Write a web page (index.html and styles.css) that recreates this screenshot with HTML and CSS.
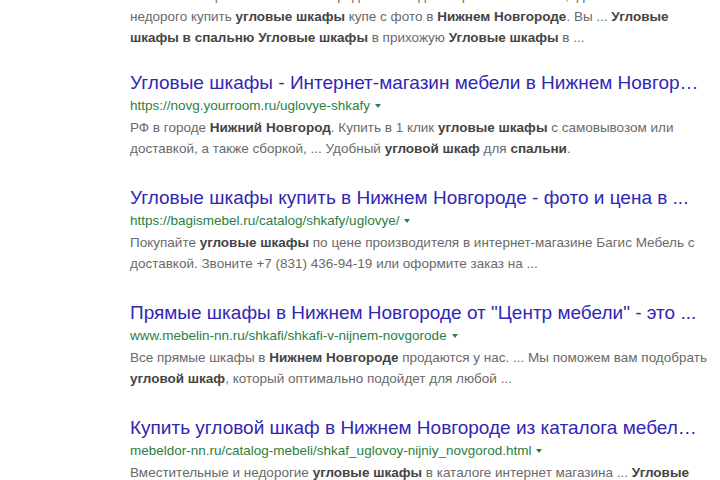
FILE: index.html
```html
<!DOCTYPE html>
<html lang="ru">
<head>
<meta charset="utf-8">
<link rel="stylesheet" href="styles.css">
</head>
<body>
<main class="results">
  <div class="result result-cut">
    <div class="snippet">Угловые шкафы в Нижнем Новгороде по выгодным ценам в каталоге, где можно<br>недорого купить <b>угловые шкафы</b> купе с фото в <b>Нижнем Новгороде</b>. Вы ... <b>Угловые</b><br><b>шкафы в спальню</b> <b>Угловые шкафы</b> в прихожую <b>Угловые шкафы</b> в ...</div>
  </div>
  <div class="result">
    <a class="title" href="#">Угловые шкафы - Интернет-магазин мебели в Нижнем Новгор…</a>
    <div class="url">https://novg.yourroom.ru/uglovye-shkafy<span class="arrow"></span></div>
    <div class="snippet">РФ в городе <b>Нижний Новгород</b>. Купить в 1 клик <b>угловые шкафы</b> с самовывозом или доставкой, а также сборкой, ... Удобный <b>угловой шкаф</b> для <b>спальни</b>.</div>
  </div>
  <div class="result">
    <a class="title" href="#">Угловые шкафы купить в Нижнем Новгороде - фото и цена в ...</a>
    <div class="url">https://bagismebel.ru/catalog/shkafy/uglovye/<span class="arrow"></span></div>
    <div class="snippet">Покупайте <b>угловые шкафы</b> по цене производителя в интернет-магазине Багис Мебель с доставкой. Звоните +7 (831) 436-94-19 или оформите заказ на ...</div>
  </div>
  <div class="result">
    <a class="title" href="#">Прямые шкафы в Нижнем Новгороде от "Центр мебели" - это ...</a>
    <div class="url">www.mebelin-nn.ru/shkafi/shkafi-v-nijnem-novgorode<span class="arrow"></span></div>
    <div class="snippet">Все прямые шкафы в <b>Нижнем Новгороде</b> продаются у нас. ... Мы поможем вам подобрать <b>угловой шкаф</b>, который оптимально подойдет для любой ...</div>
  </div>
  <div class="result">
    <a class="title" href="#">Купить угловой шкаф в Нижнем Новгороде из каталога мебел…</a>
    <div class="url">mebeldor-nn.ru/catalog-mebeli/shkaf_uglovoy-nijniy_novgorod.html<span class="arrow"></span></div>
    <div class="snippet">Вместительные и недорогие <b>угловые шкафы</b> в каталоге интернет магазина ... <b>Угловые</b> <b>шкафы</b> в Нижнем Новгороде по низким ценам с доставкой.</div>
  </div>
</main>
</body>
</html>
```
FILE: styles.css
```css
html, body {
  margin: 0;
  padding: 0;
  background: #ffffff;
  overflow: hidden;
}
body {
  font-family: "Liberation Sans", Arial, sans-serif;
}
.results {
  padding-left: 130px;
  width: 585px;
}
.result {
  margin-bottom: 27px;
}
.result-cut {
  margin-top: -15px;
  margin-bottom: 23px;
}
.title {
  display: block;
  font-size: 19px;
  line-height: 23px;
  color: #3127b4;
  text-decoration: none;
  white-space: nowrap;
}
.url {
  font-size: 13.5px;
  line-height: 23px;
  color: #2b8040;
  white-space: nowrap;
}
.arrow {
  display: inline-block;
  margin-left: 5px;
  vertical-align: middle;
  border-left: 3px solid transparent;
  border-right: 3px solid transparent;
  border-top: 4px solid #2b8040;
}
.snippet {
  font-size: 13.5px;
  line-height: 21px;
  color: #6a6a6a;
  width: 585px;
}
.snippet b {
  color: #444444;
  font-weight: bold;
}
```
